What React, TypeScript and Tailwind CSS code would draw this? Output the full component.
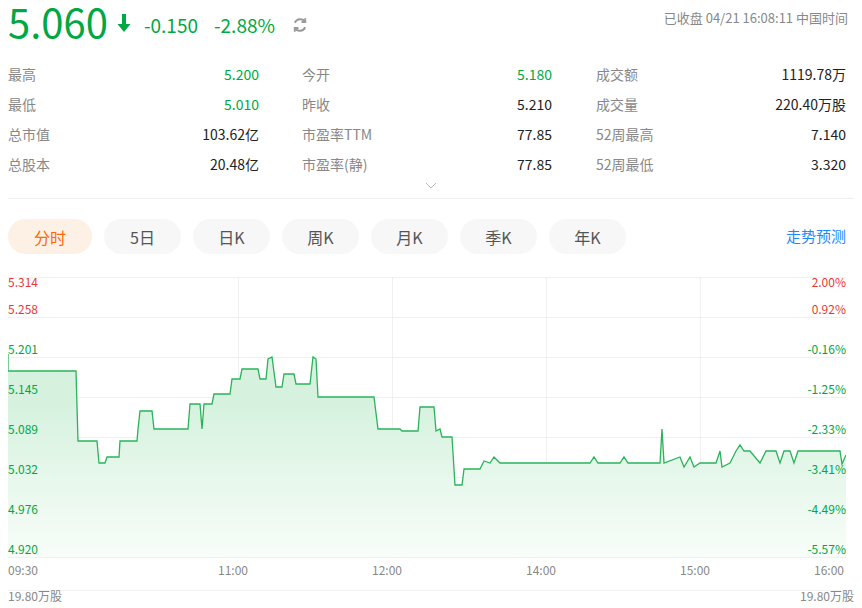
import React from "react";

const G = "#00a843";
const pts: [number, number][] = [[0,355],[0,372],[68,372],[70,442],[89,442],[91,464],[97,464],[99,458],[111,458],[112,442],[129,442],[130,430],[132,412],[144,412],[146,430],[180,430],[182,405],[192,405],[194,430],[196,405],[204,405],[206,395],[222,395],[224,380],[232,380],[234,370],[250,370],[252,380],[258,380],[260,360],[264,358],[268,388],[274,388],[276,375],[286,375],[288,385],[302,385],[305,358],[308,360],[310,398],[366,398],[370,430],[392,430],[394,432],[410,432],[412,408],[426,408],[428,432],[432,430],[434,438],[444,438],[447,486],[454,486],[456,470],[472,470],[476,462],[482,464],[486,458],[492,464],[582,464],[586,458],[590,464],[612,464],[616,458],[620,464],[652,464],[654,430],[656,464],[672,458],[676,468],[682,458],[686,468],[692,464],[708,464],[712,452],[714,468],[722,464],[728,452],[732,446],[736,452],[742,452],[752,464],[758,452],[768,452],[772,464],[776,452],[782,452],[786,464],[790,452],[832,452],[834,465],[838,456]];

export default function App() {
  const T = 278;
  const line = pts.map(([x, y]) => `${x},${y - T}`).join(" ");
  const area = `0,280 ${line} 838,280`;
  const stats = [
    ["最高", "5.200", true, "今开", "5.180", true, "成交额", "1119.78万"],
    ["最低", "5.010", true, "昨收", "5.210", false, "成交量", "220.40万股"],
    ["总市值", "103.62亿", false, "市盈率TTM", "77.85", false, "52周最高", "7.140"],
    ["总股本", "20.48亿", false, "市盈率(静)", "77.85", false, "52周最低", "3.320"],
  ] as const;
  const left = [["5.314", 283, "#e53935"], ["5.258", 310, "#e53935"], ["5.201", 350, G], ["5.145", 390, G], ["5.089", 430, G], ["5.032", 470, G], ["4.976", 510, G], ["4.920", 550, G]] as const;
  const right = ["2.00%", "0.92%", "-0.16%", "-1.25%", "-2.33%", "-3.41%", "-4.49%", "-5.57%"];
  const tabs = ["分时", "5日", "日K", "周K", "月K", "季K", "年K"];
  const times = [["09:30", 0], ["11:00", 210], ["12:00", 364], ["14:00", 518], ["15:00", 672], ["16:00", 806]] as const;
  return (
    <div className="w-[862px] h-[608px] bg-white overflow-hidden relative" style={{ fontFamily: '"Microsoft YaHei","Noto Sans CJK SC",sans-serif' }}>
      <div className="flex items-start justify-between px-2 h-[58px]">
        <div className="flex items-center gap-2 pt-[1px]">
          <span className="text-[40px] leading-[40px] text-[#00a843]">5.060</span>
          <svg width="16" height="20" viewBox="0 0 16 20" className="mt-1"><path d="M6 1h4v10h4.5L8 19 1.5 11H6z" fill={G} /></svg>
          <span className="text-[19px] text-[#00a843] ml-1 mt-2">-0.150</span>
          <span className="text-[19px] text-[#00a843] ml-2 mt-2">-2.88%</span>
          <svg width="18" height="18" viewBox="0 0 24 24" className="ml-2 mt-2" fill="none" stroke="#999" strokeWidth="2.5"><path d="M19 8a8 8 0 0 0-14 1M5 16a8 8 0 0 0 14-1" /><path d="M19 3v5h-5M5 21v-5h5" /></svg>
        </div>
        <span className="text-[13px] text-[#888] mt-[8px] pr-[6px]">已收盘 04/21 16:08:11 中国时间</span>
      </div>
      <div className="px-2 mt-[1px]">
        {stats.map((r, i) => (
          <div key={i} className="flex h-[30px] items-center text-[14px]">
            <div className="w-[251px] flex justify-between"><span className="text-[#888]">{r[0]}</span><span className={r[2] ? "text-[#00a843]" : "text-[#222]"}>{r[1]}</span></div>
            <div className="w-[43px]" />
            <div className="w-[250px] flex justify-between"><span className="text-[#888]">{r[3]}</span><span className={r[5] ? "text-[#00a843]" : "text-[#222]"}>{r[4]}</span></div>
            <div className="w-[44px]" />
            <div className="w-[250px] flex justify-between"><span className="text-[#888]">{r[6]}</span><span className="text-[#222]">{r[7]}</span></div>
          </div>
        ))}
      </div>
      <div className="flex justify-center h-[14px] items-center mt-[0px]">
        <svg width="12" height="8" viewBox="0 0 12 8"><path d="M1 1l5 5 5-5" stroke="#bbb" fill="none" /></svg>
      </div>
      <div className="mx-2 border-t border-[#eee] mt-[5px]" />
      <div className="flex items-center px-2 mt-[20px] h-[35px]">
        <div className="flex gap-[12px]">
          {tabs.map((t, i) => (
            <div key={t} className={`h-[35px] rounded-full flex items-center justify-center text-[16px] ${i === 0 ? "bg-[#fdf1e6] text-[#ff6a00] w-[84px]" : "bg-[#f7f7f7] text-[#555] w-[77px]"}`}>{t}</div>
          ))}
        </div>
        <span className="ml-auto text-[15px] text-[#1e88ff] pr-[8px]">走势预测</span>
      </div>
      <div className="relative mt-[23px] mx-2 w-[838px] h-[280px]">
        <svg width="838" height="281" className="block">
          <defs>
            <linearGradient id="g" x1="0" y1="0" x2="0" y2="1">
              <stop offset="0.25" stopColor="#d6f2df" />
              <stop offset="1" stopColor="#f8fdf9" />
            </linearGradient>
          </defs>
          {[0, 40, 80, 120, 160, 200, 240, 280].map((y) => <line key={y} x1="0" x2="838" y1={y + 0.5} y2={y + 0.5} stroke="#f0f0f0" />)}
          {[230, 384, 538, 692].map((x) => <line key={x} x1={x + 0.5} x2={x + 0.5} y1="0" y2="280" stroke="#f0f0f0" />)}
          <polygon points={area} fill="url(#g)" />
          <polyline points={line} fill="none" stroke="#2bb35a" strokeWidth="1.3" />
        </svg>
        {left.map(([v, y, c]) => <span key={v} className="absolute left-0 text-[12px] leading-none" style={{ top: y - 278 - 6, color: c }}>{v}</span>)}
        {right.map((v, i) => <span key={v} className="absolute right-0 text-[12px] leading-none" style={{ top: left[i][1] - 278 - 6, color: i < 2 ? "#e53935" : G }}>{v}</span>)}
      </div>
      <div className="relative mx-2 h-[20px] mt-[4px] text-[12px] text-[#888]">
        {times.map(([t, x]) => <span key={t} className="absolute top-0" style={{ left: x }}>{t}</span>)}
      </div>
      <div className="mx-2 border-t border-[#f2f2f2] mt-[9px]" />
      <div className="flex justify-between px-2 text-[12px] text-[#888] mt-[-4px]">
        <span>19.80万股</span><span>19.80万股</span>
      </div>
    </div>
  );
}
